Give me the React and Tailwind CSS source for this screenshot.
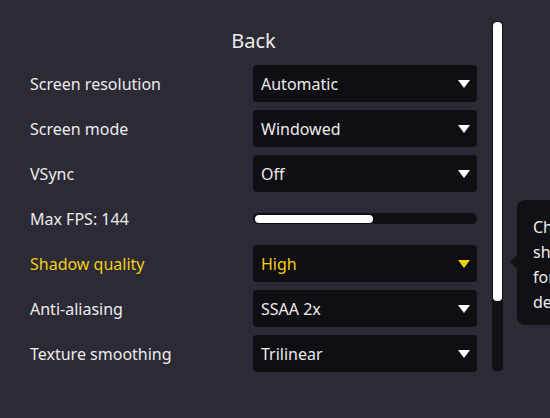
import React from 'react';

const rows = [
  { label: 'Screen resolution', value: 'Automatic' },
  { label: 'Screen mode', value: 'Windowed' },
  { label: 'VSync', value: 'Off' },
  { label: 'Max FPS: 144', slider: 0.53 },
  { label: 'Shadow quality', value: 'High', active: true },
  { label: 'Anti-aliasing', value: 'SSAA 2x' },
  { label: 'Texture smoothing', value: 'Trilinear' },
];

function Caret({ color }) {
  return (
    <svg width="12" height="8" viewBox="0 0 12 8" className="shrink-0">
      <path d="M0 0 H12 L6 8 Z" fill={color} />
    </svg>
  );
}

export default function App() {
  return (
    <div
      className="relative w-[550px] h-[418px] overflow-hidden bg-[#2c2a35] text-[#ececec] select-none"
      style={{ fontFamily: '"Noto Sans", "Open Sans", sans-serif' }}
    >
      <div className="flex pt-[21px] pl-[30px]">
        {/* settings column */}
        <div className="w-[447px] flex flex-col">
          <div className="h-[40px] flex items-center justify-center text-[20px]">Back</div>
          <div className="mt-[4px] flex flex-col gap-[8px]">
            {rows.map((r) => (
              <div key={r.label} className="h-[37px] flex items-center">
                <div className={`w-[223px] text-[16px] ${r.active ? 'text-[#f2d110]' : ''}`}>{r.label}</div>
                {r.slider ? (
                  <div className="w-[224px] h-[11px] rounded-full bg-[#0f0e13] p-[1.5px]">
                    <div className="h-full w-[118px] rounded-full bg-white" />
                  </div>
                ) : (
                  <div className="w-[224px] h-full rounded-[4px] bg-[#0f0e13] flex items-center justify-between pl-[8px] pr-[7px]">
                    <span className={`text-[16px] ${r.active ? 'text-[#f2d110]' : ''}`}>{r.value}</span>
                    <Caret color={r.active ? '#f2d110' : '#ffffff'} />
                  </div>
                )}
              </div>
            ))}
          </div>
        </div>

        {/* scrollbar */}
        <div className="ml-[15px] w-[11px] h-[350px] rounded-[4px] bg-[#121116] p-[1px]">
          <div className="w-full h-[279px] rounded-[4px] bg-white" />
        </div>
      </div>

      {/* tooltip */}
      <div className="absolute left-[517px] top-[200px] w-[220px] h-[125px] rounded-[8px] bg-[#111015] pl-[16px] pt-[15px] text-[16px] leading-[25px] whitespace-nowrap">
        <div>Changes the quality</div>
        <div>shadows are drawn</div>
        <div>for more detailed</div>
        <div>depth in the scene</div>
        <div className="absolute left-[-7px] top-[55px] w-0 h-0 border-y-[7px] border-y-transparent border-r-[7px] border-r-[#111015]" />
      </div>
    </div>
  );
}
